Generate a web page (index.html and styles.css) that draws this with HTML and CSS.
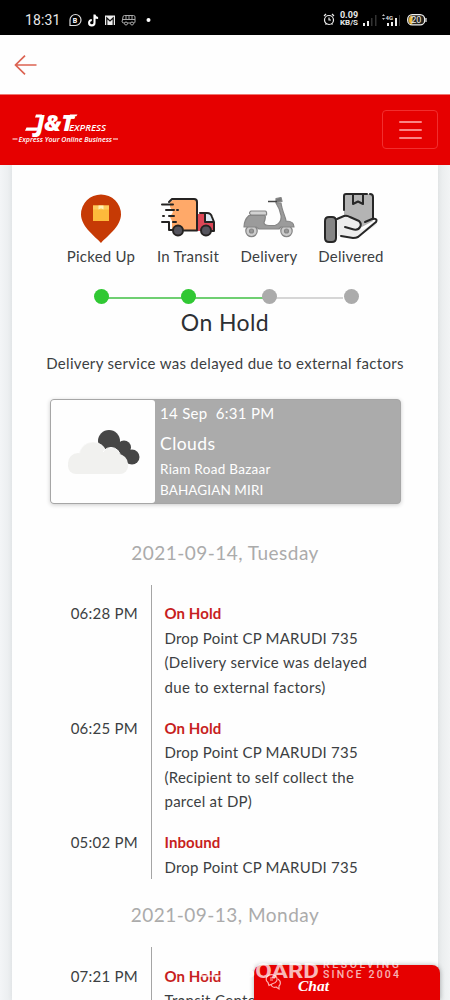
FILE: index.html
```html
<!DOCTYPE html>
<html lang="en">
<head>
<meta charset="utf-8">
<meta name="viewport" content="width=device-width">
<title>J&amp;T Express tracking</title>
<link rel="stylesheet" href="styles.css">
</head>
<body>
<div class="screen">
  <header class="status">
    <span class="clock">18:31</span>
    <svg class="status-left" width="90" height="18" viewBox="0 0 90 18" fill="none" stroke="#ddd">
      <path d="M2 14.5V9a5.5 5.5 0 1 1 5.5 5.5z" stroke-width="1.2"/>
      <text x="4.8" y="12.2" class="badge-b">B</text>
      <path d="M26.5 3.5v8.2a2.7 2.7 0 1 1-2.7-2.7M26.5 4c.4 2 1.8 3 3.6 3" stroke="#fff" stroke-width="2.1"/>
      <path d="M37 4.5h10v9.5H37z" fill="#eee" stroke="none"/><path d="M38.8 14V7l3.2 3 3.2-3v7" stroke="#111" stroke-width="1.2"/>
      <path d="M55 6q0-1.500 1.500-1.500h9Q67 4.500 67 6v5q0 1-1 1H56q-1.500 0-2-1zM54.500 8.500H67M58 5v3M61 5v3M64 5v3" stroke="#aaa"/><circle cx="58" cy="12.500" r="1.500" fill="#000" stroke="#aaa"/><circle cx="64" cy="12.500" r="1.500" fill="#000" stroke="#aaa"/>
      <circle cx="80.500" cy="9" r="2" fill="#fff" stroke="none"/>
    </svg>
    <div class="status-right">
      <svg width="12" height="13" viewBox="0 0 12 13" fill="none" stroke="#eee" stroke-width="1.200"><circle cx="6" cy="7" r="4.500"/><path d="M6 4.500V7h2M1 3l2-2M11 3L9 1M2.500 11.500l1-1M9.500 11.500l-1-1"/></svg>
      <span class="speed"><span class="rate">0.09</span><span>KB/S</span></span>
      <svg width="15" height="14" viewBox="0 0 15 14"><path d="M1 10h2v3H1zM5 8h2v5H5z" fill="#eee"/><path d="M9 5h1.500v8H9zM13 2h1.500v11H13z" fill="#333"/></svg>
      <svg class="signal-4g" width="20" height="14" viewBox="0 0 20 14"><text x="4.500" y="6.500" class="net">4G</text><path d="M6 10h2v3H6zM10 9h2v4h-2zM14 5h2v8h-2z" fill="#eee"/><path d="M18 2h1v11h-1z" fill="#333"/><path d="M1 3l1.500-2L4 3zM1 5h3L2.500 7z" fill="#bbb"/></svg>
      <svg class="battery" width="20" height="12" viewBox="0 0 20 12"><rect x=".7" y=".7" width="17" height="10.200" rx="4.500" fill="#26251f" stroke="#eee" stroke-width="1.300"/><path d="M5 2v7.700C1 10 1.500 2 5 2z" fill="#efbd3c" stroke="#efbd3c"/><path d="M19 4v4" stroke="#ddd" stroke-width="1.300"/><text x="4.300" y="9.300" class="pct">20</text></svg>
    </div>
  </header>
  <div class="appbar">
    <svg width="24" height="22" viewBox="0 0 24 22" fill="none" stroke="#dc6352" stroke-width="1.700"><path d="M22.500 11H1.500M11 1.700L1.500 11l9.500 9.300"/></svg>
  </div>
  <nav class="navbar">
    <svg class="logo" width="110" height="32" viewBox="0 0 110 32" fill="#fff">
      <text x="24" y="17.500" class="logo-main" textLength="38" lengthAdjust="spacingAndGlyphs">J&amp;T</text>
      <path d="M14.500 14.500h12l-1.500 3.200H13zM24 1.500h6l-1 3h-6zM58 1.500h7.500l-1.200 1.700h-7zM58 4h5l-1 1.500h-5z"/>
      <text x="57" y="17.500" class="logo-sub" textLength="37" lengthAdjust="spacingAndGlyphs">EXPRESS</text>
      <text x="6.500" y="28.500" class="logo-tag" textLength="93.500" lengthAdjust="spacingAndGlyphs">Express Your Online Business</text>
      <path d="M.5 25.500h5v1h-5zM101 25.500h5v1h-5z"/>
    </svg>
    <button class="toggler" aria-label="Menu"><i></i><i></i><i></i></button>
  </nav>
  <main class="card">
    <section class="steps">
      <div class="step picked">
        <svg width="60" height="56" viewBox="0 0 60 56"><path d="M30 50C26 45 10 34 10 21.500a20 20 0 0 1 40 0C50 34 34 45 30 50z" fill="#c63a05"/><path d="M22 12.500h16V28H22z" fill="#fdba3b"/><path d="M22 12.500h16v4H22z" fill="#fdc95c"/><path d="M27.500 12.500h5v4l-2.500-1.200-2.500 1.200z" fill="#fff0b5"/></svg>
        <span class="step-name">Picked Up</span><b class="dot done"></b>
      </div>
      <div class="step transit">
        <svg width="60" height="56" viewBox="-1 0 60 56" fill="none" stroke="#252322" stroke-width="2" stroke-linecap="round" stroke-linejoin="round"><path d="M11 9l3-2h24v30H13V28l-2-4 3-5-3-5z" fill="#ffa969" stroke="none"/><path d="M38 21h12l5 8v9H38z" fill="#dd4656" stroke="none"/><path d="M45 20h3q4 0 5 4l2 5H45z" fill="#dce8f3" stroke="none"/><path d="M10 9l3-3h22q3 0 3 3v28M41 20h7q4 0 5 4l2 5v9h-3M46 21v8h8M25 37.500h13M3 11.500h11M7 17h8M18 17h1M4 23h1M10 23h5M3 29h7v8h4M14 29h3"/><circle cx="19" cy="37.500" r="5" fill="#55545d"/><circle cx="47" cy="37.500" r="5" fill="#55545d"/></svg>
        <span class="step-name">In Transit</span><b class="dot done"></b>
      </div>
      <div class="step delivery">
        <svg width="60" height="56" viewBox="0 0 60 56" fill="none" stroke="#858585" stroke-width="1.200" stroke-linejoin="round"><circle cx="12.500" cy="38" r="5.700" fill="#ccc"/><circle cx="47.500" cy="38" r="5.700" fill="#ccc"/><circle cx="12.500" cy="38" r="2" fill="#999"/><circle cx="47.500" cy="38" r="2" fill="#999"/><path d="M10 22.500h16q1 2-1 7 0 3 5 3h6q7-3 6-10Q41 16 37 10h5c1 8 5 15 5 18 5 0 8 2 8 6H42l-2 2H20l-3-2H5q0-7 5-11.500z" fill="#9b9b9b"/><path d="M12 18h14q2 0 1.500 4H12q-3-2 0-4z" fill="#d2d2d2"/><path d="M37 5.500l5-1 1 4-6 1z" fill="#777"/><path d="M29 8.500h9" stroke="#444" stroke-width="1.500"/></svg>
        <span class="step-name">Delivery</span><b class="dot"></b>
      </div>
      <div class="step delivered">
        <svg width="60" height="56" viewBox="-1 0 60 56" fill="none" stroke="#272727" stroke-width="2" stroke-linecap="round" stroke-linejoin="round"><path d="M22 1h29v27L38 35 22 22z" fill="#b4b4b4" stroke="none"/><path d="M22 17V3q0-2 2-2h21M48 1q3 0 3 3v22M31 1v10l5-2.500 5 2.500V1"/><path d="M15 26l6-2q3-1 7 1l9 3q4 4 1 9 6-1 11-6c5-4 8-1 4 2L34 45l-18-2z" fill="#ededed" stroke="none"/><path d="M15 26l7-3q3-1 6 1l9 4q3 3 1 6-2 4-8 2l-7-2M43 29l7-3q6-1 4 3L36 44q-2 1-5 1l-12-2"/><path d="M3 28q0-4 4-4h3q4 0 4 4v17q0 4-4 4H7q-4 0-4-4z" fill="#858585"/></svg>
        <span class="step-name">Delivered</span><b class="dot"></b>
      </div>
    </section>
    <h1 class="state">On Hold</h1>
    <p class="reason">Delivery service was delayed due to external factors</p>
    <section class="weather">
      <div class="weather-icon"><svg width="80" height="56" viewBox="0 0 80 56"><g fill="#464646"><circle cx="46" cy="15" r="11"/><circle cx="61" cy="21.500" r="7"/><circle cx="69" cy="31" r="7.500"/><path d="M47 16l16 0 7 18-3 4-15-6z"/></g><g fill="#f1f1ef"><circle cx="30" cy="30" r="14" stroke="#fefefe" stroke-width=".5"/><circle cx="48" cy="31" r="9.500" stroke="#fefefe"/><rect x="5" y="32" width="60" height="16" rx="8"/><circle cx="15" cy="37" r="10"/><circle cx="55" cy="38" r="10"/><path d="M20 26h30v21H20z"/></g></svg></div>
      <div class="weather-info">
        <span class="w-date">14 Sep&nbsp; 6:31 PM</span><span class="w-type">Clouds</span><span class="w-place">Riam Road Bazaar</span><span class="w-area">BAHAGIAN MIRI</span>
      </div>
    </section>
    <h2 class="day">2021-09-14, Tuesday</h2>
    <section class="timeline">
      <time>06:28 PM</time>
      <div class="event"><strong>On Hold</strong><span class="place">Drop Point CP MARUDI 735</span><span>(Delivery service was delayed</span><span>due to external factors)</span></div>
      <time>06:25 PM</time>
      <div class="event"><strong>On Hold</strong><span class="place">Drop Point CP MARUDI 735</span><span class="note">(Recipient to self collect the</span><span class="note">parcel at DP)</span></div>
      <time>05:02 PM</time>
      <div class="event"><strong>Inbound</strong><span class="place">Drop Point CP MARUDI 735</span></div>
    </section>
    <h2 class="day second">2021-09-13, Monday</h2>
    <section class="timeline">
      <time>07:21 PM</time>
      <div class="event"><strong>On Hold</strong><span>Transit Center</span></div>
    </section>
  </main>
  <div class="chat">
    <svg width="18" height="18" viewBox="0 0 18 18" fill="none" stroke="#ffb0b0" stroke-width="1.200"><path d="M3 9.500A5.500 4.500 0 1 1 8 10.500L4 12.500z"/><path d="M13 6c4 3 2 6 1 7v3l-3-2c-3 1-5-1-5-3M5 5h5M5 7h3"/></svg>
    <span>Chat</span>
  </div>
  <svg class="watermark" width="260" height="40" viewBox="0 0 260 40">
    <path d="M10 16h29" stroke="#fff" stroke-width="1.500" opacity=".8"/>
    <text x="50" y="18" class="wm-big" textLength="79" lengthAdjust="spacingAndGlyphs">BOARD</text>
    <text x="133" y="7.500" class="wm-small" textLength="76">RESOLVING</text>
    <text x="133" y="17.500" class="wm-small" textLength="76">SINCE 2004</text>
  </svg>
</div>
</body>
</html>
```
FILE: styles.css
```css
* { box-sizing: border-box; }
body { margin: 0; background: #eff1f2; font-family: Lato, "Open Sans", sans-serif; color: #3c3f42; }
.screen { position: relative; width: 450px; height: 1000px; overflow: hidden; display: flex; flex-direction: column; background: linear-gradient(90deg, #f3f5f7, #e9ecee 12px, #e8ebec 438px, #f2f4f5); }
svg { display: block; flex: none; }
.status { height: 35px; flex: none; background: #000; color: #e8e8e8; display: flex; align-items: center; padding: 4px 23px 0 25px; }
.clock { font: 14px Roboto, sans-serif; letter-spacing: .1px; width: 43px; }
.badge-b { font: bold 7px Roboto, sans-serif; fill: #fff; stroke: none; }
.status-right { display: flex; align-items: center; margin-left: auto; }
.speed { font: bold 8px/8px Roboto, sans-serif; width: 20px; margin: 0 3px 0 4px; display: flex; flex-direction: column; align-items: center; white-space: nowrap; }
.speed .rate { font-size: 9px; line-height: 7px; }
.signal-4g { margin: 0 6px 0 4px; }
.net { font: bold 6px Roboto, sans-serif; fill: #ddd; }
.pct { font: 9px Roboto, sans-serif; fill: #eee; }
.appbar { height: 59px; flex: none; background: #fefefe; padding: 19px 14px; }
.navbar { height: 71px; flex: none; background: #e60000; border-top: 1px solid #ee7772; display: flex; justify-content: space-between; align-items: flex-start; padding: 15px 12px 0; }
.logo { margin-top: 3px; }
.logo-main { font: italic 800 22px "Open Sans", sans-serif; }
.logo-sub { font: italic 600 9.500px "Open Sans", sans-serif; }
.logo-tag { font: italic 600 7px "Open Sans", sans-serif; }
.toggler { width: 56px; height: 39px; border: 1px solid #f22e2e; border-radius: 4px; background: none; display: flex; flex-direction: column; align-items: center; justify-content: center; gap: 6px; padding: 0; }
.toggler i { width: 23px; height: 2px; background: #fb8585; border-radius: 1px; }
.card { width: 426px; margin: 0 12px; flex: 1; min-height: 0; background: #fefefe; box-shadow: 0 0 5px rgba(0,0,0,.06); }
.steps { height: 140px; padding: 28px 0 0 46px; display: flex; align-items: flex-start; }
.step { flex: none; display: flex; flex-direction: column; align-items: center; position: relative; }
.picked { width: 86px; }
.transit { width: 88px; }
.delivery { width: 74px; }
.delivered { width: 90px; }
.step-name { font-size: 15px; line-height: 20px; margin-top: -3px; white-space: nowrap; letter-spacing: .25px; }
.dot { width: 15px; height: 15px; margin-top: 23px; border-radius: 50%; background: #ababab; z-index: 1; }
.dot.done { background: #30c833; }
.step:not(:last-child)::after { content: ""; position: absolute; left: 50%; top: 104px; width: 100%; height: 1.500px; background: #6fcf72; }
.step.delivery::after { background: #d6d6d6; }
.state { margin: -1px 0 0; font-size: 23px; font-weight: 400; line-height: 36px; text-align: center; letter-spacing: .4px; color: #2d3033; }
.reason { margin: 13px 0 0; font-size: 15px; line-height: 20px; text-align: center; letter-spacing: .31px; white-space: nowrap; }
.weather { width: 351px; height: 105px; margin: 26px 0 0 38px; display: flex; background: #ababab; border: 1px solid #a6a6a6; border-radius: 4px; box-shadow: 0 1px 4px rgba(0,0,0,.2); }
.weather-icon { width: 104px; height: 103px; background: #fefefe; border-radius: 3px; padding: 26px 12px; }
.weather-info { color: #fff; padding: 3px 5px; display: flex; flex-direction: column; white-space: nowrap; letter-spacing: .3px; }
.w-date { font-size: 15px; line-height: 21px; }
.w-type { font-size: 17.500px; line-height: 26px; margin-top: 7px; letter-spacing: .45px; }
.w-place, .w-area { font-size: 13.500px; line-height: 21px; }
.w-area { letter-spacing: .1px; }
.w-place { margin-top: 2px; }
.day { margin: 32px 0 0; font-size: 19px; font-weight: 400; line-height: 34px; text-align: center; color: #ababab; letter-spacing: .48px; }
.day.second { margin-top: 19px; }
.timeline { margin-top: 15px; display: grid; grid-template-columns: 139px 1fr; font-size: 15px; line-height: 24.500px; letter-spacing: .35px; }
.timeline time { padding: 16.400px 13px 0 0; text-align: right; white-space: nowrap; letter-spacing: .25px; }
.event { padding: 16.400px 0 0 12.500px; border-left: 1px solid #a5a5a5; display: flex; flex-direction: column; align-items: flex-start; white-space: nowrap; }
.event strong { color: #c71f21; letter-spacing: .08px; }
.event .place { letter-spacing: .23px; }
.event .note { letter-spacing: .25px; }
.chat { position: absolute; left: 254px; bottom: 0; width: 186px; height: 35px; border-radius: 8px 8px 0 0; background: #e60000; color: #fff; box-shadow: 0 0 5px rgba(0,0,0,.3); display: flex; padding: 8px 11px; }
.chat span { font: italic bold 15.500px/18px "Liberation Serif", serif; margin: 4px 0 0 15px; letter-spacing: 0; }
.watermark { position: absolute; left: 190px; top: 960px; }
.wm-big { font: bold 21px Roboto, sans-serif; fill: #fff; opacity: .72; }
.wm-small { font: 500 10.500px Roboto, sans-serif; fill: #fff; opacity: .7; }
```
